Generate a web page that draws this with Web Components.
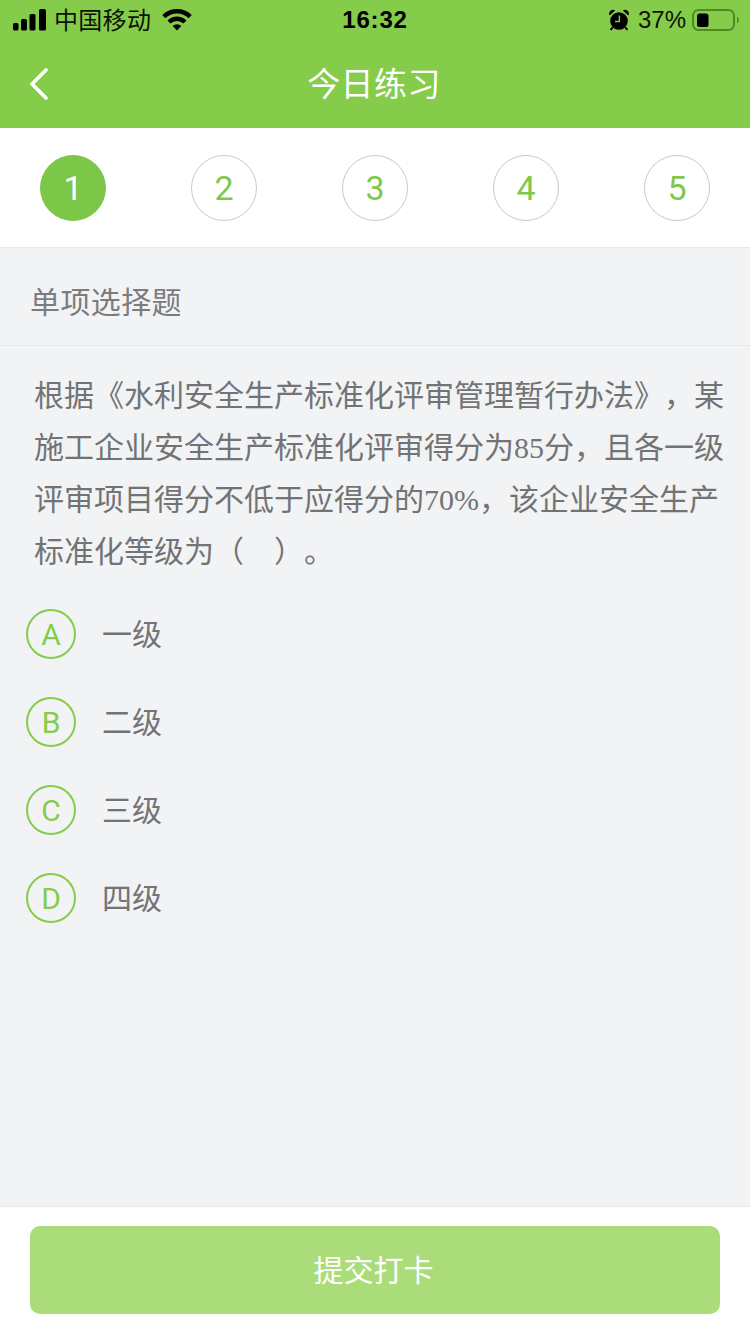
<!DOCTYPE html>
<html lang="zh">
<head>
<meta charset="utf-8">
<title>今日练习</title>
<style>
  html, body { margin: 0; padding: 0; }
  body {
    font-family: "Liberation Sans", "Noto Sans CJK SC", sans-serif;
    background: #f2f3f5;
    text-spacing-trim: space-all;
  }
  .num { font-family: "Liberation Serif", serif; }
</style>
</head>
<body>
<practice-page>
  <status-bar slot="top"></status-bar>
  <nav-bar slot="top">今日练习</nav-bar>
  <step-list slot="top">
    <step-item active>1</step-item>
    <step-item>2</step-item>
    <step-item>3</step-item>
    <step-item>4</step-item>
    <step-item>5</step-item>
  </step-list>
  <section-title>单项选择题</section-title>
  <question-text>
    <div>根据《水利安全生产标准化评审管理暂行办法》，某</div>
    <div>施工企业安全生产标准化评审得分为<span class="num">85</span>分，且各一级</div>
    <div>评审项目得分不低于应得分的<span class="num">70%</span>，该企业安全生产</div>
    <div>标准化等级为（　）。</div>
  </question-text>
  <option-list>
    <option-row letter="A">一级</option-row>
    <option-row letter="B">二级</option-row>
    <option-row letter="C">三级</option-row>
    <option-row letter="D">四级</option-row>
  </option-list>
  <submit-bar slot="bottom">提交打卡</submit-bar>
</practice-page>

<script>
class PracticePage extends HTMLElement {
  constructor() {
    super();
    this.attachShadow({ mode: "open" });
    this.shadowRoot.innerHTML = `
      <style>
        :host { display: flex; flex-direction: column; width: 750px; height: 1334px; overflow: hidden; background: #f2f3f5; }
        .main { flex: 1; display: flex; flex-direction: column; min-height: 0; }
      </style>
      <slot name="top"></slot>
      <div class="main"><slot></slot></div>
      <slot name="bottom"></slot>`;
  }
}

class StatusBar extends HTMLElement {
  constructor() {
    super();
    this.attachShadow({ mode: "open" });
    this.shadowRoot.innerHTML = `
      <style>
        :host { display: grid; grid-template-columns: 1fr auto 1fr; align-items: center; height: 40px; background: #86cc4b; color: #0b1405; font-size: 24px; }
        .left { display: flex; align-items: center; padding-left: 13px; }
        .carrier { margin-left: 8px; margin-bottom: 4px; width: 98px; white-space: nowrap; letter-spacing: 0.3px; }
        .wifi { margin-left: 10px; }
        .time { font-weight: 700; font-size: 24px; letter-spacing: 0.8px; color: #000; }
        .right { display: flex; align-items: center; justify-content: flex-end; padding-right: 11px; }
        .pct { margin-left: 9px; margin-right: 6px; font-size: 24px; }
        svg { display: block; }
      </style>
      <div class="left">
        <svg width="33" height="22" viewBox="0 0 33 22" fill="#000">
          <rect x="0" y="14" width="5.5" height="7.5" rx="1.5"/>
          <rect x="8" y="10" width="6" height="11.5" rx="1.5"/>
          <rect x="16.5" y="5" width="6" height="16.5" rx="1.5"/>
          <rect x="26" y="0" width="7" height="21.5" rx="1.5"/>
        </svg>
        <span class="carrier">中国移动</span>
        <svg class="wifi" width="30" height="22" viewBox="0 0 30 22" fill="none" stroke="#000" stroke-width="4.4">
          <path d="M1.8 7.6a19 19 0 0 1 26.4 0"/>
          <path d="M7 13a11.6 11.6 0 0 1 16 0"/>
          <path d="M15 21.6l-4.4-4.6a6.2 6.2 0 0 1 8.8 0z" fill="#000" stroke="none"/>
        </svg>
      </div>
      <div class="time">16:32</div>
      <div class="right">
        <svg width="20" height="22" viewBox="0 0 20 22">
          <circle cx="10" cy="12" r="8.8" fill="#000"/>
          <path d="M0.6 6.4a3.8 3.8 0 0 1 5.6-4.8zM19.4 6.4a3.8 3.8 0 0 0-5.6-4.8z" fill="#000"/>
          <path d="M3.6 18.4l-2 2.6M16.4 18.4l2 2.6" stroke="#000" stroke-width="2"/>
          <path d="M10.4 6.5v6H6" fill="none" stroke="#86cc4b" stroke-width="1.4"/>
        </svg>
        <span class="pct">37%</span>
        <svg width="47" height="22" viewBox="0 0 47 22">
          <rect x="1" y="1" width="41" height="20" rx="5.5" fill="none" stroke="#4f8a25" stroke-width="2"/>
          <rect x="5" y="4.5" width="11.5" height="13.5" rx="2.5" fill="#000"/>
          <path d="M45 7.5a4 4 0 0 1 0 7z" fill="#4f8a25"/>
        </svg>
      </div>`;
  }
}

class NavBar extends HTMLElement {
  constructor() {
    super();
    this.attachShadow({ mode: "open" });
    this.shadowRoot.innerHTML = `
      <style>
        :host { display: flex; align-items: center; justify-content: center; position: relative; height: 88px; box-sizing: border-box; padding: 0 2px 5px 0; background: #86cc4b; color: #fff; font-size: 33px; letter-spacing: 0.4px; }
        svg { position: absolute; left: 29px; top: 28px; }
      </style>
      <svg width="20" height="32" viewBox="0 0 20 32" fill="none" stroke="#fff" stroke-width="3.6" stroke-linecap="round" stroke-linejoin="round">
        <path d="M17 2L3 16l14 14"/>
      </svg>
      <slot></slot>`;
  }
}

class StepList extends HTMLElement {
  constructor() {
    super();
    this.attachShadow({ mode: "open" });
    this.shadowRoot.innerHTML = `
      <style>
        :host { display: flex; justify-content: space-between; box-sizing: border-box; height: 120px; padding: 27px 40px 0; background: #fff; border-bottom: 1px solid #e6e7e9; }
      </style>
      <slot></slot>`;
  }
}

class StepItem extends HTMLElement {
  constructor() {
    super();
    this.attachShadow({ mode: "open" });
    this.shadowRoot.innerHTML = `
      <style>
        :host { display: flex; align-items: center; justify-content: center; box-sizing: border-box; width: 66px; height: 66px; border-radius: 50%; border: 1px solid #c9c9c9; color: #7fc84a; font-family: Roboto, sans-serif; font-weight: 400; font-size: 34px; }
        :host([active]) { background: #7dc748; border-color: #7dc748; color: #fff; }
      </style>
      <slot></slot>`;
  }
}

class SectionTitle extends HTMLElement {
  constructor() {
    super();
    this.attachShadow({ mode: "open" });
    this.shadowRoot.innerHTML = `
      <style>
        :host { display: flex; align-items: center; box-sizing: border-box; height: 98px; padding: 6px 0 0 30px; border-bottom: 1px solid #e6e7e9; color: #7b7c7e; font-size: 30px; letter-spacing: 0.4px; }
      </style>
      <slot></slot>`;
  }
}

class QuestionText extends HTMLElement {
  constructor() {
    super();
    this.attachShadow({ mode: "open" });
    this.shadowRoot.innerHTML = `
      <style>
        :host { display: block; padding: 24px 0 0 34px; color: #727375; font-size: 30px; line-height: 52px; white-space: nowrap; }
      </style>
      <slot></slot>`;
  }
}

class OptionList extends HTMLElement {
  constructor() {
    super();
    this.attachShadow({ mode: "open" });
    this.shadowRoot.innerHTML = `
      <style>
        :host { display: flex; flex-direction: column; gap: 38px; padding: 31px 0 0 26px; }
      </style>
      <slot></slot>`;
  }
}

class OptionRow extends HTMLElement {
  constructor() {
    super();
    this.attachShadow({ mode: "open" });
    const letter = this.getAttribute("letter") || "";
    this.shadowRoot.innerHTML = `
      <style>
        :host { display: flex; align-items: center; gap: 26px; height: 50px; color: #727375; font-size: 30px; }
        .mark { display: flex; align-items: center; justify-content: center; box-sizing: border-box; width: 50px; height: 50px; border-radius: 50%; border: 2px solid #86cc4b; color: #86cc4b; font-family: Roboto, sans-serif; font-weight: 400; font-size: 30px; }
        .label { margin-bottom: 4px; }
      </style>
      <span class="mark">${letter}</span>
      <span class="label"><slot></slot></span>`;
  }
}

class SubmitBar extends HTMLElement {
  constructor() {
    super();
    this.attachShadow({ mode: "open" });
    this.shadowRoot.innerHTML = `
      <style>
        :host { display: block; box-sizing: border-box; height: 128px; padding: 19px 30px 0; background: #fff; border-top: 1px solid #e6e7e9; }
        .btn { display: flex; align-items: center; justify-content: center; box-sizing: border-box; height: 88px; padding: 0 3px 4px 0; border-radius: 10px; background: #aadc7a; color: #fff; font-size: 30px; }
      </style>
      <div class="btn"><slot></slot></div>`;
  }
}

customElements.define("practice-page", PracticePage);
customElements.define("status-bar", StatusBar);
customElements.define("nav-bar", NavBar);
customElements.define("step-list", StepList);
customElements.define("step-item", StepItem);
customElements.define("section-title", SectionTitle);
customElements.define("question-text", QuestionText);
customElements.define("option-list", OptionList);
customElements.define("option-row", OptionRow);
customElements.define("submit-bar", SubmitBar);
</script>
</body>
</html>
